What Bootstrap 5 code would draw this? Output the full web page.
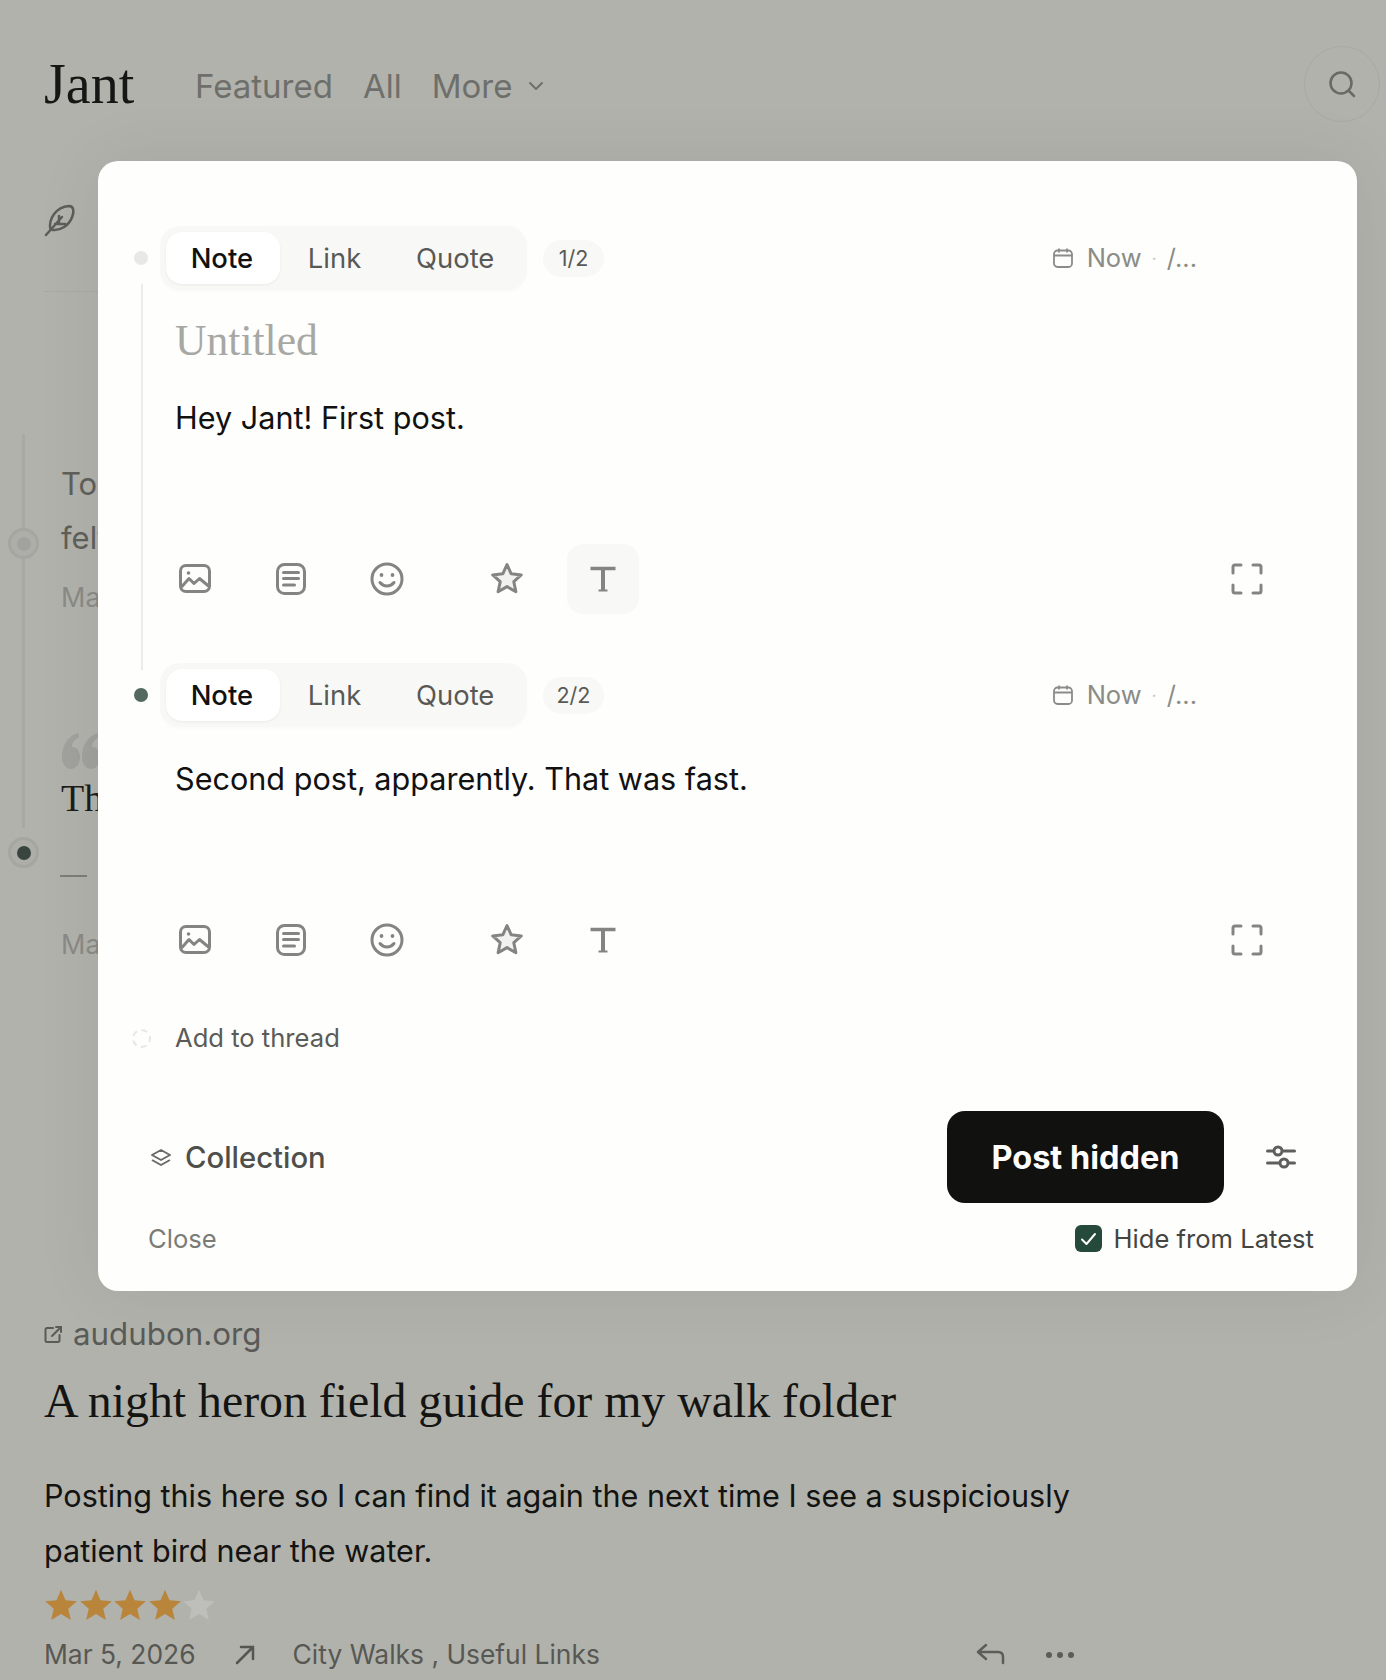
<!DOCTYPE html>
<html lang="en">
<head>
<meta charset="UTF-8">
<meta name="viewport" content="width=device-width, initial-scale=1.0">
<title>Jant</title>
<link rel="stylesheet" href="https://cdn.jsdelivr.net/npm/bootstrap@5.3.0/dist/css/bootstrap.min.css">
<style>
body { width: 1386px; height: 1680px; overflow: hidden; position: relative; background: #b1b2ac; font-family: Inter, "Liberation Sans", sans-serif; color: #111; }
.serif { font-family: "Liberation Serif", serif; }

/* page behind the dialog */
.top-head { height: 168px; padding: 46px 6px 0 44px; }
.logo { font-size: 56px; line-height: 76px; width: 151px; color: #161614; }
.top-link { font-size: 33px; line-height: 76px; color: #6e6f6a; }
.top-nav { margin-top: 2px; gap: 30px; }
.search-ring { width: 76px; height: 76px; border: 1px solid #a8a9a4; border-radius: 50%; }
.feather-row { height: 124px; margin: 0 0 0 44px; border-bottom: 1px solid #a8a9a4; width: 60px; padding-top: 35px; }
.feed { padding-left: 61px; height: 1020px; position: relative; }
.feed-line { position: absolute; left: 22px; width: 3px; background: #a8a9a4; }
.feed-node { position: absolute; left: 8px; width: 31px; height: 31px; border-radius: 50%; border: 3px solid #a5a6a1; background: #adaea8; display: flex; align-items: center; justify-content: center; }
.feed-node span { width: 14px; height: 14px; border-radius: 50%; background: #a2a39e; }
.feed-node.on span { background: #39463f; }
.feed-txt { position: absolute; left: 61px; font-size: 31px; line-height: 48px; color: #5f605b; white-space: nowrap; }
.feed-meta { font-size: 27px; color: #8a8b86; }
.feed-mark { position: absolute; left: 62px; top: 441px; }
.feed-th { font-size: 38px; color: #1c1c1a; }
.feed-dash { position: absolute; left: 60px; top: 583px; width: 27px; height: 2px; background: #7d7e79; }

.link-post { padding: 0 0 0 44px; }
.source-row { font-size: 31.300px; line-height: 44px; color: #5a5b57; gap: 10px; }
.post-title { font-size: 47.800px; line-height: 60px; color: #141412; margin: 15px 0 0; font-weight: 400; }
.post-body { font-size: 30.550px; line-height: 55px; color: #131311; margin: 37px 0 0; width: 1060px; }
.rate-row { height: 36px; margin-top: 9px; gap: .5px; }
.meta-row { width: 1031px; height: 44px; margin-top: 10px; font-size: 26.400px; color: #575853; }
.meta-arrow { margin: 0 38px 0 39px; }
.meta-dots { margin-left: 39px; }

/* composer dialog */
.composer { position: absolute; left: 98px; top: 161px; width: 1259px; height: 1130px; padding-top: 65px; background: #fefefc; border: 0; border-radius: 20px; box-shadow: 0 0 70px rgba(0, 0, 0, .07); }
.head-row { height: 64px; padding-left: 36px; padding-right: 160px; }
.thread-dot { width: 14px; height: 14px; border-radius: 50%; background: #e8e8e6; margin-right: 12px; }
.thread-dot.on { background: #54695f; }
.kind-tabs { padding: 6px; gap: 0; background: #f8f8f6; border-radius: 20px; box-shadow: 0 2px 3px rgba(0, 0, 0, .015); width: 367px; height: 64px; }
.kind-tabs .nav-link { font-size: 27.400px; line-height: 52px; height: 52px; padding: 0 2px 0 0; color: #585955; border-radius: 16px; text-align: center; }
.kind-tabs .nav-link.active { width: 114px; background: #fff; color: #111; box-shadow: 0 1px 3px rgba(0, 0, 0, .06); font-weight: 500; }
.tab-link { width: 112px; }
.tab-quote { width: 130px; }
.count-pill { margin-left: 16px; width: 61px; height: 37px; line-height: 37px; text-align: center; border-radius: 19px; background: #f8f8f6; color: #595a56; font-size: 21.500px; }
.when-row { font-size: 25.500px; color: #8b8c88; gap: 10px; }
.when-cal { margin-right: 3px; }
.when-dot { color: #c9c9c6; font-size: 18px; }
.post-block { margin-left: 43px; padding-left: 32px; padding-right: 74px; border-left: 2px solid #ebebe8; }
.block-first { margin-top: -6px; padding-top: 31px; padding-bottom: 56px; margin-bottom: -7px; }
.block-last { border-left-color: transparent; padding-top: 28px; }
.title-input { font-size: 43.600px; line-height: 50px; color: #a7a8a4; }
.text-input { font-size: 30.600px; line-height: 48px; color: #111; }
.text-gap { margin-top: 29px; }
.tool-row { height: 70px; gap: 24px; margin-left: -16px; }
.tool-row-first { margin-top: 102px; }
.tool-row-last { margin-top: 102px; }
.tool-btn { width: 72px; height: 70px; padding: 0; border: 0; border-radius: 16px; color: #848581; display: flex; align-items: center; justify-content: center; }
.tool-btn.on { background: #f8f8f6; }
.tool-star { margin-left: 24px; }
.tool-full { margin-left: auto; }
.add-row { padding-left: 34px; margin-top: 43px; height: 40px; font-size: 25.600px; color: #5a5b57; }
.dash-ring { width: 19px; height: 19px; border: 2px dashed #e6e6e3; border-radius: 50%; margin-right: 24px; }
.foot-row { margin-top: 53px; padding-left: 52px; padding-right: 61px; }
.coll-btn { font-size: 29.300px; font-weight: 500; color: #4e4f4b; gap: 13px; padding-top: 2px; }
.post-btn { width: 277px; height: 92px; padding-top: 8px; border-radius: 18px; background: #11110f; color: #fff; font-size: 32.500px; font-weight: 700; border: 0; }
.post-btn:hover { background: #11110f; color: #fff; }
.opts-btn { margin-left: 42px; }
.sub-row { margin-top: 16px; height: 40px; padding-left: 50px; padding-right: 43px; font-size: 25.600px; }
.close-lnk { color: #7a7b77; text-decoration: none; }
.hide-lbl { color: #444541; gap: 12px; }
.hide-box { width: 27px; height: 27px; border-radius: 6px; background: #25493a; display: flex; align-items: center; justify-content: center; }
</style>
</head>
<body>
<svg class="d-none">
  <symbol id="i-image" viewBox="0 0 34 34"><rect x="2.500" y="3.500" width="29" height="26" rx="5.500" fill="none" stroke="currentColor" stroke-width="3"/><circle cx="10.500" cy="11" r="1.800" fill="currentColor"/><path d="M3.500 25l7.500-8.500 5 5 5.500-5 9 7.500" fill="none" stroke="currentColor" stroke-width="3" stroke-linejoin="round"/></symbol>
  <symbol id="i-doc" viewBox="0 0 34 34"><rect x="3.500" y="2.500" width="27" height="29" rx="7" fill="none" stroke="currentColor" stroke-width="3"/><path d="M9.500 10.500h15M9.500 16.500h15M9.500 23h11" fill="none" stroke="currentColor" stroke-width="3" stroke-linecap="round"/></symbol>
  <symbol id="i-smile" viewBox="0 0 34 34"><circle cx="17" cy="17" r="15" fill="none" stroke="currentColor" stroke-width="3"/><circle cx="11.500" cy="13" r="1.900" fill="currentColor"/><circle cx="22.500" cy="13" r="1.900" fill="currentColor"/><path d="M10 20.500c3.500 4.500 10.500 4.500 14 0" fill="none" stroke="currentColor" stroke-width="3" stroke-linecap="round"/></symbol>
  <symbol id="i-star" viewBox="0 0 34 34"><path d="M17 2.500l4.200 9.300 10.100 1.100-7.500 6.800 2.100 10-8.900-5.100-8.900 5.100 2.100-10-7.500-6.800 10.100-1.100z" fill="#f1f1ef" stroke="currentColor" stroke-width="3" stroke-linejoin="round"/></symbol>
  <symbol id="i-type" viewBox="0 0 34 34"><path d="M4.500 6.500h25" fill="none" stroke="currentColor" stroke-width="3.500"/><path d="M17 6.500v22" fill="none" stroke="currentColor" stroke-width="4"/><path d="M12.500 28.500h9" fill="none" stroke="currentColor" stroke-width="2"/></symbol>
  <symbol id="i-full" viewBox="0 0 34 34"><path d="M3 11V5a2 2 0 0 1 2-2h6M23 3h6a2 2 0 0 1 2 2v6M31 23v6a2 2 0 0 1-2 2h-6M11 31H5a2 2 0 0 1-2-2v-6" fill="none" stroke="currentColor" stroke-width="3" stroke-linecap="round"/></symbol>
  <symbol id="i-cal" viewBox="0 0 22 22"><rect x="2" y="3.500" width="18" height="16.500" rx="3.500" fill="none" stroke="currentColor" stroke-width="1.800"/><path d="M2 8.500h18M7 1.500v4M15 1.500v4" fill="none" stroke="currentColor" stroke-width="1.800"/></symbol>
  <symbol id="i-bigstar" viewBox="0 0 30 30"><path d="M15 1.500l4 9.300 10 .9-7.600 6.600 2.300 9.900-8.700-5.300-8.700 5.300 2.300-9.900L1 11.700l10-.9z" fill="currentColor"/></symbol>
</svg>

<header class="top-head d-flex align-items-start">
  <div class="logo serif">Jant</div>
  <nav class="top-nav d-flex align-items-center">
    <a class="top-link text-decoration-none">Featured</a>
    <a class="top-link text-decoration-none">All</a>
    <a class="top-link text-decoration-none d-flex align-items-center gap-3">More
      <svg width="16" height="10" viewBox="0 0 16 10"><path d="M2 2l6 6 6-6" fill="none" stroke="#6e6f6a" stroke-width="2" stroke-linecap="round" stroke-linejoin="round"/></svg>
    </a>
  </nav>
  <div class="search-ring ms-auto d-flex align-items-center justify-content-center">
    <svg width="30" height="30" viewBox="0 0 30 30"><circle cx="14" cy="14" r="10.500" fill="none" stroke="#696a65" stroke-width="2.500"/><path d="M22 22l5 5" stroke="#696a65" stroke-width="2.500" stroke-linecap="round"/></svg>
  </div>
</header>

<div class="feather-row">
  <svg width="32" height="34" viewBox="0 0 32 34" fill="none" stroke="#5d5e59" stroke-width="2.500" stroke-linecap="round" stroke-linejoin="round"><path d="M2 32L18 14M6.500 26.500C4 16 12 4 25 3c5 0 5 6 3.500 10-3 9-12 16-22 13.500zM11 21h10M15 13v8"/></svg>
</div>

<section class="feed">
  <div class="feed-line" style="top: 142px; height: 94px"></div>
  <div class="feed-line" style="top: 266px; height: 270px"></div>
  <div class="feed-node" style="top: 236px"><span></span></div>
  <div class="feed-node on" style="top: 545px"><span></span></div>
  <div class="feed-txt" style="top: 168px">Today</div>
  <div class="feed-txt" style="top: 222px">felt</div>
  <div class="feed-txt feed-meta" style="top: 282px">Mar 7</div>
  <svg class="feed-mark" width="44" height="36" viewBox="0 0 44 36" fill="#a1a29d"><path d="M0 24C0 12 6 3 16 0l1 4c-5 3-7 6-7 10 5 0 8 4 8 10 0 7-4 12-9 12S0 31 0 24zM20 24C20 12 26 3 36 0l1 4c-5 3-7 6-7 10 5 0 8 4 8 10 0 7-4 12-9 12s-9-5-9-12z"/></svg>
  <div class="feed-txt feed-th serif" style="top: 482px">The</div>
  <div class="feed-dash"></div>
  <div class="feed-txt feed-meta" style="top: 629px">Mar 6</div>
</section>

<article class="link-post">
  <div class="source-row d-flex align-items-center">
    <svg width="19" height="19" viewBox="0 0 19 19" fill="none" stroke="#5a5b57" stroke-width="2" stroke-linecap="round"><path d="M9 3H3a1.500 1.500 0 0 0-1.500 1.500v11A1.500 1.500 0 0 0 3 17h11a1.500 1.500 0 0 0 1.500-1.500V10M8 11L17 2M12 2h5v5"/></svg>
    <span>audubon.org</span>
  </div>
  <h2 class="post-title serif">A night heron field guide for my walk folder</h2>
  <p class="post-body">Posting this here so I can find it again the next time I see a suspiciously patient bird near the water.</p>
  <div class="rate-row d-flex align-items-center">
    <svg width="34" height="34" style="color: #b8853a"><use href="#i-bigstar"/></svg>
    <svg width="34" height="34" style="color: #b8853a"><use href="#i-bigstar"/></svg>
    <svg width="34" height="34" style="color: #b8853a"><use href="#i-bigstar"/></svg>
    <svg width="34" height="34" style="color: #b8853a"><use href="#i-bigstar"/></svg>
    <svg width="34" height="34" style="color: #bebfba"><use href="#i-bigstar"/></svg>
  </div>
  <div class="meta-row d-flex align-items-center">
    <span>Mar 5, 2026</span>
    <svg class="meta-arrow" width="20" height="20" viewBox="0 0 20 20" fill="none" stroke="#555652" stroke-width="2.500" stroke-linecap="round"><path d="M2 18L18 2M6 2h12v12"/></svg>
    <span>City Walks , Useful Links</span>
    <svg class="ms-auto" width="30" height="24" viewBox="0 0 30 24" fill="none" stroke="#5c5d58" stroke-width="2.500" stroke-linecap="round" stroke-linejoin="round"><path d="M10 2L2 9l8 7M2 9h20c4 0 5 3 5 5v6"/></svg>
    <svg class="meta-dots" width="30" height="8" viewBox="0 0 30 8" fill="#5c5d58"><circle cx="4" cy="4" r="3"/><circle cx="15" cy="4" r="3"/><circle cx="26" cy="4" r="3"/></svg>
  </div>
</article>

<div class="composer card">
  <div class="head-row d-flex align-items-center">
    <span class="thread-dot"></span>
    <div class="kind-tabs nav flex-nowrap">
      <a class="nav-link active">Note</a>
      <a class="nav-link tab-link">Link</a>
      <a class="nav-link tab-quote">Quote</a>
    </div>
    <span class="count-pill">1/2</span>
    <div class="when-row d-flex align-items-center ms-auto">
      <svg class="when-cal" width="22" height="22"><use href="#i-cal"/></svg><span>Now</span><span class="when-dot">·</span><span>/...</span>
    </div>
  </div>
  <div class="post-block block-first">
    <div class="title-input serif">Untitled</div>
    <div class="text-input text-gap">Hey Jant! First post.</div>
    <div class="tool-row tool-row-first d-flex">
      <button class="tool-btn btn"><svg width="34" height="34"><use href="#i-image"/></svg></button>
      <button class="tool-btn btn"><svg width="34" height="34"><use href="#i-doc"/></svg></button>
      <button class="tool-btn btn"><svg width="34" height="34"><use href="#i-smile"/></svg></button>
      <button class="tool-btn btn tool-star"><svg width="34" height="34"><use href="#i-star"/></svg></button>
      <button class="tool-btn btn on"><svg width="34" height="34"><use href="#i-type"/></svg></button>
      <button class="tool-btn btn tool-full"><svg width="34" height="34"><use href="#i-full"/></svg></button>
    </div>
  </div>
  <div class="head-row d-flex align-items-center">
    <span class="thread-dot on"></span>
    <div class="kind-tabs nav flex-nowrap">
      <a class="nav-link active">Note</a>
      <a class="nav-link tab-link">Link</a>
      <a class="nav-link tab-quote">Quote</a>
    </div>
    <span class="count-pill">2/2</span>
    <div class="when-row d-flex align-items-center ms-auto">
      <svg class="when-cal" width="22" height="22"><use href="#i-cal"/></svg><span>Now</span><span class="when-dot">·</span><span>/...</span>
    </div>
  </div>
  <div class="post-block block-last">
    <div class="text-input">Second post, apparently. That was fast.</div>
    <div class="tool-row tool-row-last d-flex">
      <button class="tool-btn btn"><svg width="34" height="34"><use href="#i-image"/></svg></button>
      <button class="tool-btn btn"><svg width="34" height="34"><use href="#i-doc"/></svg></button>
      <button class="tool-btn btn"><svg width="34" height="34"><use href="#i-smile"/></svg></button>
      <button class="tool-btn btn tool-star"><svg width="34" height="34"><use href="#i-star"/></svg></button>
      <button class="tool-btn btn"><svg width="34" height="34"><use href="#i-type"/></svg></button>
      <button class="tool-btn btn tool-full"><svg width="34" height="34"><use href="#i-full"/></svg></button>
    </div>
  </div>
  <div class="add-row d-flex align-items-center"><span class="dash-ring"></span>Add to thread</div>
  <div class="foot-row d-flex align-items-center">
    <div class="coll-btn d-flex align-items-center">
      <svg width="22" height="20" viewBox="0 0 22 20" fill="none" stroke="#6a6b67" stroke-width="2" stroke-linejoin="round"><path d="M11 2l9 5-9 5-9-5zM2 12l9 5 9-5"/></svg>
      <span>Collection</span>
    </div>
    <button class="post-btn btn ms-auto">Post hidden</button>
    <svg class="opts-btn" width="30" height="24" viewBox="0 0 30 24" fill="#fefefc" stroke="#5f605c" stroke-width="3" stroke-linecap="round"><path d="M1.500 6h27M1.500 18h27"/><circle cx="12" cy="6" r="4"/><circle cx="18" cy="18" r="4"/></svg>
  </div>
  <div class="sub-row d-flex align-items-center justify-content-between">
    <a class="close-lnk">Close</a>
    <div class="hide-lbl d-flex align-items-center">
      <span class="hide-box"><svg width="17" height="14" viewBox="0 0 17 14" fill="none" stroke="#fff" stroke-width="2" stroke-linecap="round" stroke-linejoin="round"><path d="M2 7.500L6.500 12 15 2"/></svg></span>
      <span>Hide from Latest</span>
    </div>
  </div>
</div>

<script src="https://cdn.jsdelivr.net/npm/bootstrap@5.3.0/dist/js/bootstrap.bundle.min.js"></script>
</body>
</html>
